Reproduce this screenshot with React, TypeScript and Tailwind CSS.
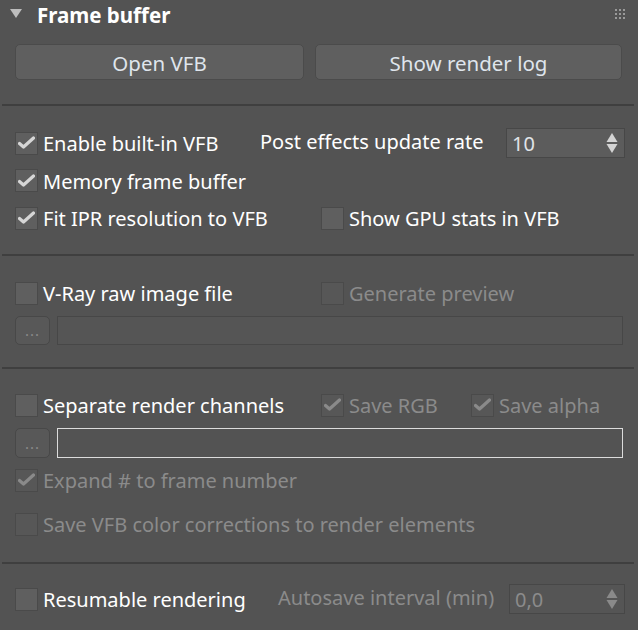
import React from "react";

const font = { fontFamily: '"Noto Sans", "Open Sans", sans-serif' };

function Check({ checked, disabled }: { checked?: boolean; disabled?: boolean }) {
  return (
    <div
      className={
        "w-[23px] h-[23px] shrink-0 border flex items-center justify-center " +
        (disabled ? "bg-[#575757] border-[#4a4a4a]" : "bg-[#5f5f5f] border-[#4a4a4a]")
      }
    >
      {checked && (
        <svg width="17" height="14" viewBox="0 0 17 14">
          <path
            d="M1.5 7.5 L5.5 11 L15.5 2"
            fill="none"
            stroke={disabled ? "#8a8a8a" : "#d6d6d6"}
            strokeWidth="3.2"
            strokeLinecap="round"
            strokeLinejoin="round"
          />
        </svg>
      )}
    </div>
  );
}

function Item({
  label,
  checked,
  disabled,
}: {
  label: string;
  checked?: boolean;
  disabled?: boolean;
}) {
  return (
    <div className="flex items-center gap-[5px]">
      <Check checked={checked} disabled={disabled} />
      <span
        className={
          "text-[20px] leading-none whitespace-nowrap pt-[2px] " + (disabled ? "text-[#8b8b8b]" : "text-white")
        }
      >
        {label}
      </span>
    </div>
  );
}

function Spinner({ value, disabled }: { value: string; disabled?: boolean }) {
  const c = disabled ? "#8a8a8a" : "#d4d4d4";
  return (
    <div
      className={
        "h-[30px] border flex items-center justify-between pl-[5px] pr-[6px] " +
        (disabled ? "bg-[#555555] border-[#474747]" : "bg-[#5c5c5c] border-[#474747]")
      }
    >
      <span className={"text-[20px] leading-none pt-[1px] " + (disabled ? "text-[#8b8b8b]" : "text-[#e0e4e8]")}>
        {value}
      </span>
      <svg width="12" height="22" viewBox="0 0 12 22">
        <path d="M6 1 L11.5 10 L0.5 10 Z" fill={c} />
        <path d="M0.5 12 L11.5 12 L6 21 Z" fill={c} />
      </svg>
    </div>
  );
}

function Sep({ className }: { className: string }) {
  return <div className={"h-[2px] bg-[#3f3f3f] mx-[2px] mr-[4px] " + className} />;
}

function DotsButton() {
  return (
    <div className="w-[35px] h-full rounded-[5px] bg-[#585858] border border-[#484848] flex items-end justify-center pb-[6px]">
      <span className="text-[15px] leading-none tracking-[1px] text-[#8a8a8a]">...</span>
    </div>
  );
}

export default function App() {
  return (
    <div className="w-[638px] h-[630px] bg-[#535353] overflow-hidden flex flex-col" style={font}>
      {/* header */}
      <div className="h-[30px] flex items-center pl-[10px] pr-[13px] relative">
        <svg width="12" height="10" viewBox="0 0 12 10" className="mt-[-2px]">
          <path d="M0 0 L12 0 L6 9 Z" fill="#bdbdbd" />
        </svg>
        <span className="ml-[15px] text-white text-[20.5px] font-bold leading-none">Frame buffer</span>
        <div className="ml-auto grid grid-cols-3 gap-[2px] mt-[-3px]">
          {Array.from({ length: 9 }).map((_, i) => (
            <div key={i} className="w-[2px] h-[2px] bg-[#9a9a9a]" />
          ))}
        </div>
      </div>

      {/* buttons */}
      <div className="mt-[14px] h-[36px] flex gap-[11px] pl-[15px] pr-[16px]">
        <div className="w-[289px] rounded-[5px] bg-[#5f5f5f] border border-[#4b4b4b] flex items-center justify-center">
          <span className="text-[20.5px] leading-none text-[#dfe5ec] pt-[2px]">Open VFB</span>
        </div>
        <div className="flex-1 rounded-[5px] bg-[#5f5f5f] border border-[#4b4b4b] flex items-center justify-center">
          <span className="text-[20.5px] leading-none text-[#dfe5ec] pt-[2px]">Show render log</span>
        </div>
      </div>

      <Sep className="mt-[24px]" />

      {/* row 1 */}
      <div className="mt-[18px] h-[38px] flex items-center pl-[15px] pr-[13px]">
        <div className="w-[245px]">
          <Item label="Enable built-in VFB" checked />
        </div>
        <span className="text-[20px] leading-none text-white whitespace-nowrap mt-[-2px]">Post effects update rate</span>
        <div className="ml-auto w-[119px]">
          <Spinner value="10" />
        </div>
      </div>
      <div className="h-[37px] flex items-center pl-[15px]">
        <Item label="Memory frame buffer" checked />
      </div>
      <div className="h-[38px] flex items-center pl-[15px]">
        <div className="w-[306px]">
          <Item label="Fit IPR resolution to VFB" checked />
        </div>
        <Item label="Show GPU stats in VFB" />
      </div>

      <Sep className="mt-[17px]" />

      <div className="mt-[18px] h-[38px] flex items-center pl-[15px]">
        <div className="w-[306px]">
          <Item label="V-Ray raw image file" />
        </div>
        <Item label="Generate preview" disabled />
      </div>
      <div className="mt-[4px] h-[29px] flex gap-[7px] pl-[15px] pr-[15px]">
        <DotsButton />
        <div className="flex-1 bg-[#555555] border border-[#474747]" />
      </div>

      <Sep className="mt-[22px]" />

      <div className="mt-[17px] h-[38px] flex items-center pl-[15px]">
        <div className="w-[306px]">
          <Item label="Separate render channels" />
        </div>
        <div className="w-[150px]">
          <Item label="Save RGB" checked disabled />
        </div>
        <Item label="Save alpha" checked disabled />
      </div>
      <div className="mt-[4px] h-[30px] flex gap-[7px] pl-[15px] pr-[15px]">
        <DotsButton />
        <div className="flex-1 bg-[#535353] border border-[#dcdcdc]" />
      </div>
      <div className="mt-[3px] h-[38px] flex items-center pl-[15px]">
        <Item label="Expand # to frame number" checked disabled />
      </div>
      <div className="mt-[6px] h-[38px] flex items-center pl-[15px]">
        <Item label="Save VFB color corrections to render elements" disabled />
      </div>

      <Sep className="mt-[19px]" />

      <div className="mt-[16px] h-[38px] flex items-center pl-[15px] pr-[13px]">
        <div className="w-[263px]">
          <Item label="Resumable rendering" />
        </div>
        <span className="text-[20px] leading-none text-[#8b8b8b] whitespace-nowrap mt-[-2px]">
          Autosave interval (min)
        </span>
        <div className="ml-auto w-[116px]">
          <Spinner value="0,0" disabled />
        </div>
      </div>
    </div>
  );
}
